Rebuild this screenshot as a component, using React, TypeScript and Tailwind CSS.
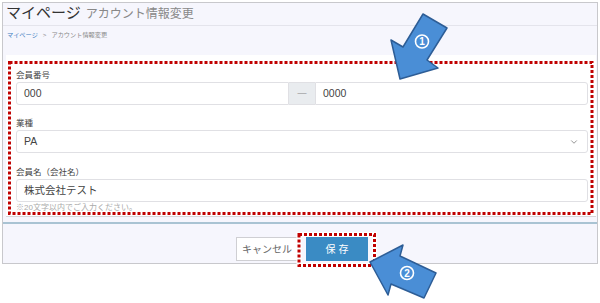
import * as React from "react"
import { ChevronDown } from "lucide-react"

const font = "font-['Liberation_Sans','Noto_Sans_CJK_JP',sans-serif]"

function Label({ children, className = "" }: { children: React.ReactNode; className?: string }) {
  return <div className={`h-[12px] mb-[1px] text-[8.5px] leading-[12px] text-[#444] ${className}`}>{children}</div>
}

const inputBox = "h-[23px] bg-white border border-[#e0e0e4] rounded-[3px] flex items-center px-[7px] text-[10.5px] text-[#444]"

// annotation overlay: red dotted boxes + the blue numbered arrows
function Annotations() {
  return (
    <svg className="absolute inset-0 pointer-events-none" width="600" height="303" viewBox="0 0 600 303">
      <g fill="none">
        <rect x="9.5" y="62.5" width="582.5" height="151" stroke="#ffffff" strokeWidth="5" />
        <rect x="9.5" y="62.5" width="582.5" height="151" stroke="#c00000" strokeWidth="3" strokeDasharray="3 2" />
        <rect x="299" y="234.5" width="75.5" height="31" stroke="#ffffff" strokeWidth="5" />
        <rect x="299" y="234.5" width="75.5" height="31" stroke="#c00000" strokeWidth="3" strokeDasharray="3 2" />
      </g>
      <polygon
        points="423,14 447,28 427,60 438,68 400,79 391,40 403,47"
        fill="#4a8ed6"
        stroke="#2d5d96"
        strokeWidth="1.5"
        strokeLinejoin="round"
      />
      <circle cx="422" cy="41.5" r="6.5" fill="none" stroke="#ffffff" strokeWidth="1.6" />
      <text x="422" y="45" textAnchor="middle" fontSize="10" fontWeight="700" fill="#ffffff" fontFamily="Liberation Sans, sans-serif">1</text>
      <polygon
        points="370,262 403,245 400,256 436,273 424,298 391,284 388,295"
        fill="#4a8ed6"
        stroke="#2d5d96"
        strokeWidth="1.5"
        strokeLinejoin="round"
      />
      <circle cx="407" cy="273" r="6.5" fill="none" stroke="#ffffff" strokeWidth="1.6" />
      <text x="407" y="276.5" textAnchor="middle" fontSize="10" fontWeight="700" fill="#ffffff" fontFamily="Liberation Sans, sans-serif">2</text>
    </svg>
  )
}

export default function App() {
  return (
    <div className={`relative w-[600px] h-[303px] bg-white overflow-hidden ${font}`}>
      <div className="mx-[2px] mt-[2px] h-[262px] border border-[#c8c8cc] bg-[#f6f6fd] flex flex-col">
        {/* page title */}
        <div className="h-[23px] flex items-end gap-[5px] pl-[3px] pb-[3px] border-b border-[#e4e4ec]">
          <span className="text-[15px] leading-[18px] text-[#333]">マイページ</span>
          <span className="text-[12px] leading-[16px] text-[#888]">アカウント情報変更</span>
        </div>

        {/* breadcrumb */}
        <div className="h-[18px] flex items-center gap-[5px] pl-[4px] text-[6.2px] text-[#888]">
          <span className="text-[#3d7cc0]">マイページ</span>
          <span>&gt;</span>
          <span>アカウント情報変更</span>
        </div>

        {/* form panel */}
        <div className="mt-[11px] ml-[3px] mr-[1px] bg-white border-b border-[#d6d6da] pt-[14px] pb-[2px] pl-[10px] pr-[8px]">
          <Label>会員番号</Label>
          <div className="flex">
            <div className={`${inputBox} flex-1 rounded-r-none`}>000</div>
            <div className="w-[26px] h-[23px] bg-[#e9ecef] border-y border-[#e0e0e4] flex items-center justify-center text-[9px] text-[#888]">—</div>
            <div className={`${inputBox} flex-1 rounded-l-none`}>0000</div>
          </div>

          <Label className="mt-[12px]">業種</Label>
          <div className={`${inputBox} justify-between`}>
            <span>PA</span>
            <ChevronDown size={10} strokeWidth={1.5} className="text-[#555] mr-[1px]" />
          </div>

          <Label className="mt-[13px]">会員名（会社名）</Label>
          <div className={inputBox}>株式会社テスト</div>
          <div className="h-[12px] text-[8px] leading-[12px] text-[#aaa]">※20文字以内でご入力ください。</div>
        </div>

        {/* footer */}
        <div className="mt-[5px] border-t-2 border-[#a9c3d3] flex-1 flex justify-center pt-[13px] pl-[4px] gap-[8px]">
          <div className="w-[62px] h-[24px] bg-white border border-[#cfcfd3] flex items-center justify-center text-[10px] text-[#666]">
            キャンセル
          </div>
          <div className="w-[62px] h-[24px] bg-[#3a8bc4] flex items-center justify-center text-[10px] text-white tracking-[3px] pl-[3px]">
            保存
          </div>
        </div>
      </div>

      <Annotations />
    </div>
  )
}
